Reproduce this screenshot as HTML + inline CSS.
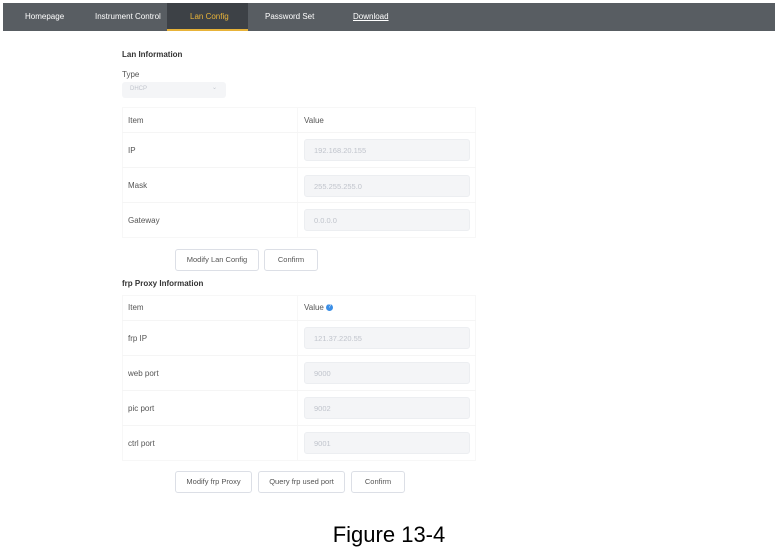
<!DOCTYPE html>
<html><head><style>
body{margin:0;width:778px;height:554px;background:#fff;font-family:"Liberation Sans",sans-serif;position:relative;overflow:hidden}
.a{position:absolute}
.nav{left:3px;top:3px;width:772px;height:28px;background:#585d62}
.nav span{position:absolute;top:9px;font-size:8px;color:#fff}
.act{left:167px;top:3px;width:81px;height:28px;background:#3d4146;border-bottom:2px solid #e8b339;box-sizing:border-box}
.t{font-size:8px;color:#333;font-weight:bold}
.l{font-size:8px;color:#555}
.row{left:122px;width:354px;height:34px;border-bottom:1px solid #f5f5f5}
.inp{left:304px;width:166px;height:22px;background:#f4f5f7;border-radius:3px;border:1px solid #eceef1;box-sizing:border-box;font-size:7.5px;color:#c0c4cc;padding:6px 0 0 9px}
.btn{height:22px;border:1px solid #dcdfe6;border-radius:3px;box-sizing:border-box;font-size:7.5px;color:#555;text-align:center;line-height:20px;background:#fff}
.sep{left:297px;width:1px;background:#f7f7f7}
</style></head><body>
<div class="a nav"></div>
<div class="a act"></div>
<div class="nav a" style="background:none">
<span style="left:22px">Homepage</span>
<span style="left:92px">Instrument Control</span>
<span style="left:187px;color:#e8b339">Lan Config</span>
<span style="left:262px">Password Set</span>
<span style="left:350px;text-decoration:underline">Download</span>
</div>
<div class="a t" style="left:122px;top:50px">Lan Information</div>
<div class="a l" style="left:122px;top:70px">Type</div>
<div class="a" style="left:122px;top:82px;width:104px;height:16px;background:#f4f5f7;border-radius:3px;font-size:6px;color:#c0c4cc;padding:4px 0 0 8px;box-sizing:border-box">DHCP<span style="position:absolute;left:90px;top:2px">⌄</span></div>
<div class="a" style="left:122px;top:107px;width:354px;height:131px;border:1px solid #f7f7f7;box-sizing:border-box"></div>
<div class="a sep" style="top:107px;height:131px"></div>
<div class="a row" style="top:107px;height:25px"></div>
<div class="a l" style="left:128px;top:116px">Item</div><div class="a l" style="left:304px;top:116px">Value</div>
<div class="a row" style="top:133px"></div><div class="a l" style="left:128px;top:146px">IP</div><div class="a inp" style="top:139px">192.168.20.155</div>
<div class="a row" style="top:168px"></div><div class="a l" style="left:128px;top:181px">Mask</div><div class="a inp" style="top:175px">255.255.255.0</div>
<div class="a l" style="left:128px;top:216px">Gateway</div><div class="a inp" style="top:209px">0.0.0.0</div>
<div class="a btn" style="left:175px;top:249px;width:84px">Modify Lan Config</div>
<div class="a btn" style="left:264px;top:249px;width:54px">Confirm</div>
<div class="a t" style="left:122px;top:279px">frp Proxy Information</div>
<div class="a" style="left:122px;top:295px;width:354px;height:166px;border:1px solid #f7f7f7;box-sizing:border-box"></div>
<div class="a sep" style="top:295px;height:166px"></div>
<div class="a row" style="top:295px;height:25px"></div>
<div class="a l" style="left:128px;top:303px">Item</div><div class="a l" style="left:304px;top:303px">Value <span style="display:inline-block;width:7px;height:7px;border-radius:50%;background:#3a8ee6;color:#fff;font-size:5px;text-align:center;line-height:7px;vertical-align:middle">?</span></div>
<div class="a row" style="top:321px"></div><div class="a l" style="left:128px;top:334px">frp IP</div><div class="a inp" style="top:327px">121.37.220.55</div>
<div class="a row" style="top:356px"></div><div class="a l" style="left:128px;top:369px">web port</div><div class="a inp" style="top:362px">9000</div>
<div class="a row" style="top:391px"></div><div class="a l" style="left:128px;top:404px">pic port</div><div class="a inp" style="top:397px">9002</div>
<div class="a l" style="left:128px;top:439px">ctrl port</div><div class="a inp" style="top:432px">9001</div>
<div class="a btn" style="left:175px;top:471px;width:77px">Modify frp Proxy</div>
<div class="a btn" style="left:258px;top:471px;width:87px">Query frp used port</div>
<div class="a btn" style="left:351px;top:471px;width:54px">Confirm</div>
<div class="a" style="left:0;width:778px;text-align:center;top:522px;font-size:22px;color:#000">Figure 13-4</div>
</body></html>
